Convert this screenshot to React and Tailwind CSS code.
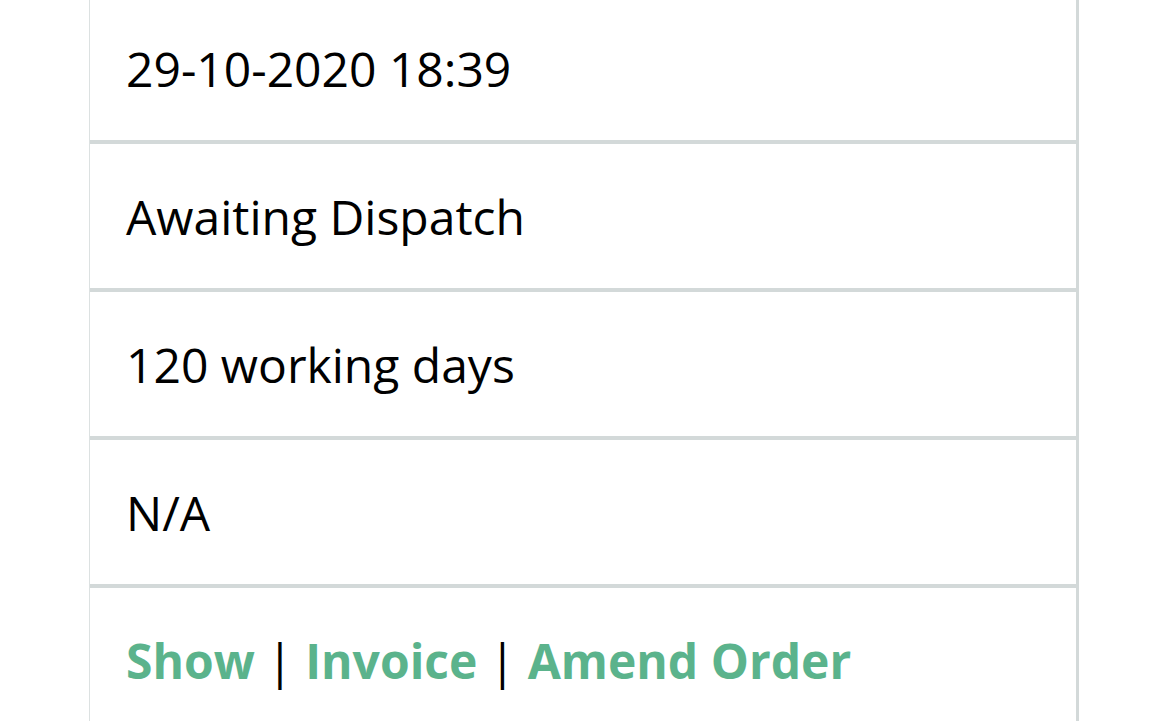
export default function App() {
  const rows = ['29-10-2020 18:39', 'Awaiting Dispatch', '120 working days', 'N/A']

  return (
    <div className="min-h-screen bg-white overflow-hidden" style={{ fontFamily: '"Open Sans", sans-serif' }}>
      <div className="ml-[89px] w-[990px] h-[725px] border-l border-l-[#dce1e1] border-r-[3px] border-r-[#d3d9d9] -mt-1">
        {rows.map((text) => (
          <div
            key={text}
            className="h-[148px] flex items-center pl-[36px] pt-[2px] border-b-4 border-[#d3d9d9] text-[48px] text-black"
          >
            {text}
          </div>
        ))}
        <div className="h-[144px] flex items-center pl-[36px] pt-[2px] text-[48px] text-black">
          <a className="font-bold text-[#5bb38c]">Show</a>
          <span className="mx-[12px]">|</span>
          <a className="font-bold text-[#5bb38c]">Invoice</a>
          <span className="mx-[12px]">|</span>
          <a className="font-bold text-[#5bb38c]">Amend Order</a>
        </div>
      </div>
    </div>
  )
}
